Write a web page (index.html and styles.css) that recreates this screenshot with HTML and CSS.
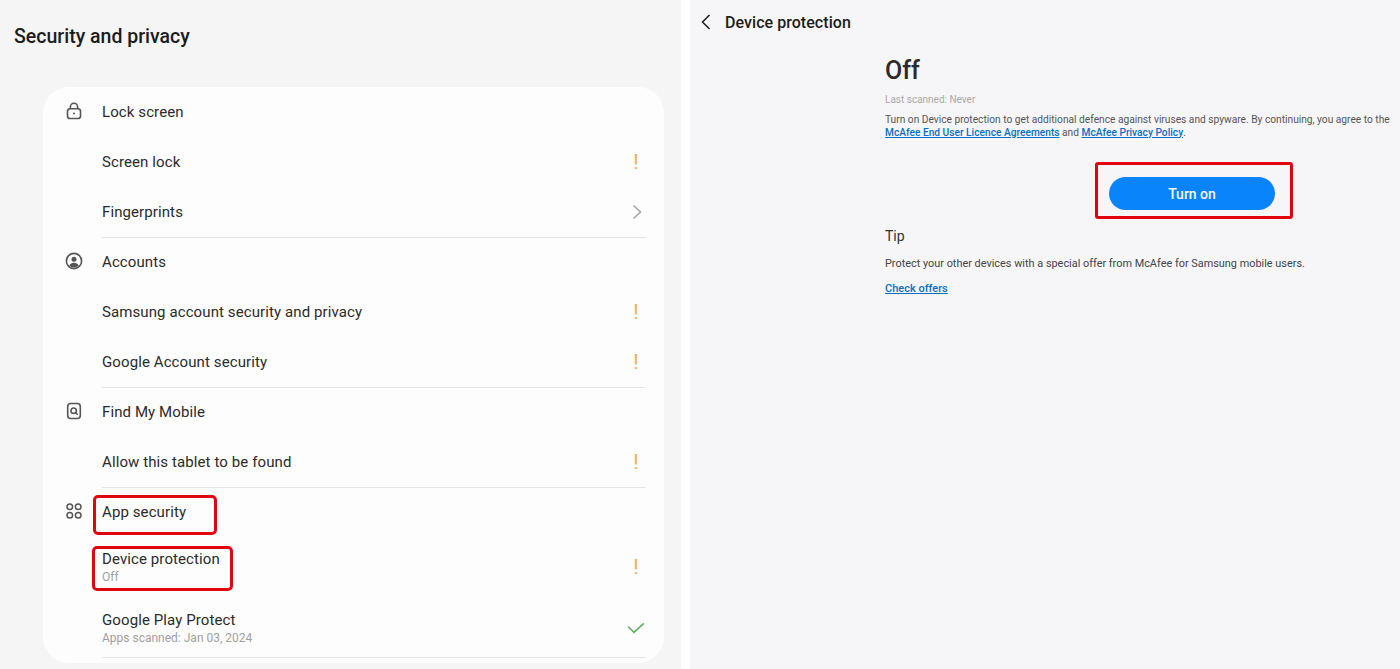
FILE: index.html
```html
<!DOCTYPE html>
<html lang="en">
<head>
  <meta charset="UTF-8">
  <title>Security and privacy</title>
  <link rel="stylesheet" href="styles.css">
</head>
<body>
  <div class="shot">
    <section class="panel-left">
      <h1 class="page-title">Security and privacy</h1>
      <div class="card">
        <div class="group">
          <div class="row">
            <svg class="row-icon" viewBox="0 0 18 18" fill="none" stroke="#555" stroke-width="1.6"><rect x="2.5" y="6.8" width="13" height="9.7" rx="2.6"/><path d="M5.4 6.8V4.9a3.6 3.6 0 0 1 7.2 0v1.9"/><circle cx="9" cy="11.6" r="1" fill="#555" stroke="none"/></svg>
            <span class="row-label">Lock screen</span>
          </div>
          <div class="row">
            <span class="row-label">Screen lock</span>
            <span class="warn">!</span>
          </div>
          <div class="row">
            <span class="row-label">Fingerprints</span>
            <svg class="chevron" viewBox="0 0 10 16" fill="none" stroke="#a3a3a3" stroke-width="1.5"><path d="M1.5 1.5 8.5 8l-7 6.5"/></svg>
          </div>
        </div>
        <div class="group">
          <div class="row">
            <svg class="row-icon" viewBox="0 0 18 18" fill="none" stroke="#555" stroke-width="1.6"><circle cx="9" cy="9" r="7.6"/><circle cx="9" cy="7.2" r="2.5" fill="#555" stroke="none"/><path d="M4.2 13.6c1-2 2.8-2.8 4.8-2.8s3.8.8 4.8 2.8a7 7 0 0 1-9.6 0z" fill="#555" stroke="none"/></svg>
            <span class="row-label">Accounts</span>
          </div>
          <div class="row">
            <span class="row-label">Samsung account security and privacy</span>
            <span class="warn">!</span>
          </div>
          <div class="row">
            <span class="row-label">Google Account security</span>
            <span class="warn">!</span>
          </div>
        </div>
        <div class="group">
          <div class="row">
            <svg class="row-icon" viewBox="0 0 18 18" fill="none" stroke="#555" stroke-width="1.6"><rect x="2.7" y="1.5" width="12.6" height="15" rx="3"/><circle cx="8.7" cy="8.7" r="2.7"/><path d="m10.7 10.7 2 2"/></svg>
            <span class="row-label">Find My Mobile</span>
          </div>
          <div class="row">
            <span class="row-label">Allow this tablet to be found</span>
            <span class="warn">!</span>
          </div>
        </div>
        <div class="group">
          <div class="row">
            <svg class="row-icon" viewBox="0 0 18 18" fill="none" stroke="#555" stroke-width="1.5"><circle cx="4.8" cy="4.8" r="2.8"/><circle cx="13.2" cy="4.8" r="2.8"/><circle cx="4.8" cy="13.2" r="2.8"/><circle cx="13.2" cy="13.2" r="2.8"/></svg>
            <span class="row-label">App security</span>
            <span class="callout callout-app"></span>
          </div>
          <div class="row row-device">
            <div class="row-text">
              <span class="row-label">Device protection</span>
              <span class="row-sub">Off</span>
            </div>
            <span class="warn">!</span>
            <span class="callout callout-device"></span>
          </div>
          <div class="row row-play">
            <div class="row-text">
              <span class="row-label">Google Play Protect</span>
              <span class="row-sub">Apps scanned: Jan 03, 2024</span>
            </div>
            <svg class="check" viewBox="0 0 18 12" fill="none" stroke="#5cad60" stroke-width="1.5"><path d="M1.2 4.8 7 10.4 16.8 1.4"/></svg>
          </div>
        </div>
      </div>
    </section>

    <section class="panel-right">
      <header class="top-bar">
        <svg class="back" viewBox="0 0 10 16" fill="none" stroke="#1c1c1c" stroke-width="1.5"><path d="M8.5 1 1.5 8l7 7"/></svg>
        <h2 class="top-title">Device protection</h2>
      </header>
      <div class="content">
        <div class="status">Off</div>
        <div class="scanned">Last scanned: Never</div>
        <p class="desc">Turn on Device protection to get additional defence against viruses and spyware. By continuing, you agree to the <a href="#">McAfee End User Licence Agreements</a> and <a href="#">McAfee Privacy Policy</a>.</p>
        <div class="btn-wrap">
          <button class="btn-primary">Turn on</button>
        </div>
        <h3 class="tip-title">Tip</h3>
        <p class="tip-text">Protect your other devices with a special offer from McAfee for Samsung mobile users.</p>
        <a class="tip-link" href="#">Check offers</a>
      </div>
    </section>
  </div>
</body>
</html>
```

FILE: styles.css
```css
* {
  box-sizing: border-box;
  margin: 0;
  padding: 0;
}
html, body {
  height: 100%;
  overflow: hidden;
  background: #fff;
  font-family: Roboto, "Liberation Sans", sans-serif;
}
.shot {
  display: flex;
  height: 669px;
}

/* left screenshot */
.panel-left {
  width: 681px;
  background: #f5f5f5;
  padding: 0 17px 0 43px;
}
.page-title {
  font-size: 19.5px;
  font-weight: 500;
  color: #1c1c1c;
  margin-left: -29px;
  height: 87px;
  padding-top: 26px;
  line-height: 22px;
}
.card {
  background: #fdfdfd;
  border-radius: 26px;
  width: 621px;
  height: 576px;
  padding: 0 18px 0 59px;
  overflow: hidden;
}
.group {
  border-bottom: 1px solid #e4e4e4;
  margin-bottom: -1px;
}
.group:last-child {
  height: 171px;
  margin-bottom: 0;
}
.row {
  height: 50px;
  display: flex;
  align-items: center;
  justify-content: space-between;
  position: relative;
}
.row-device {
  height: 58px;
  padding-top: 2px;
}
.row-play {
  height: 62px;
  padding-top: 4px;
}
.row-label {
  font-size: 15px;
  color: #2b2b2b;
  letter-spacing: 0.1px;
  line-height: 18px;
}
.row-text {
  display: flex;
  flex-direction: column;
}
.row-sub {
  font-size: 12px;
  color: #a0a0a0;
  line-height: 16px;
  margin-top: 1px;
}
.row-icon {
  width: 18px;
  height: 18px;
  position: absolute;
  left: -37px;
  top: 15px;
}
.warn {
  font-size: 21px;
  font-weight: 400;
  line-height: 20px;
  color: #f2ad55;
  width: 8px;
  margin-right: 6px;
  text-align: center;
}
.chevron {
  width: 10px;
  height: 16px;
  margin-right: 4px;
}
.check {
  width: 18px;
  height: 12px;
  margin-right: 1px;
}

/* red annotation boxes */
.callout {
  position: absolute;
  border: 3px solid #e0040f;
  border-radius: 5px;
}
.callout-app {
  left: -9px;
  top: 8px;
  width: 124px;
  height: 40px;
}
.callout-device {
  left: -10px;
  top: 9px;
  width: 141px;
  height: 45px;
}

/* right screenshot */
.panel-right {
  flex: 1;
  margin-left: 9px;
  background: #f6f6f8;
}
.top-bar {
  display: flex;
  align-items: center;
  height: 44px;
  padding-left: 11px;
}
.back {
  width: 10px;
  height: 16px;
}
.top-title {
  font-size: 16px;
  font-weight: 500;
  letter-spacing: 0.05px;
  color: #1c1c1c;
  margin-left: 14px;
}
.content {
  padding: 11px 5px 0 195px;
}
.status {
  font-size: 25px;
  font-weight: 500;
  color: #2a2a2a;
  line-height: 32px;
}
.scanned {
  font-size: 10px;
  color: #a8a8a8;
  margin-top: 7px;
  line-height: 12px;
}
.desc {
  font-size: 10.2px;
  color: #555;
  line-height: 12.5px;
  margin-top: 8px;
}
.desc a, .tip-link {
  color: #0a6fc4;
  font-weight: 500;
}
.btn-wrap {
  margin: 38px 0 0 224px;
  width: 166px;
  position: relative;
}
.btn-wrap::after {
  content: "";
  position: absolute;
  left: -14px;
  right: -18px;
  top: -15px;
  bottom: -9px;
  border: 3px solid #e0040f;
  border-radius: 3px;
}
.btn-primary {
  display: block;
  width: 166px;
  height: 33px;
  border: none;
  border-radius: 17px;
  background: #0a84fb;
  color: #f4f9ff;
  font-family: inherit;
  font-size: 14px;
  font-weight: 500;
}
.tip-title {
  font-size: 14px;
  font-weight: 400;
  color: #333;
  margin-top: 18px;
  line-height: 17px;
}
.tip-text {
  font-size: 10.9px;
  color: #444;
  margin-top: 12px;
  line-height: 14px;
}
.tip-link {
  display: inline-block;
  font-size: 11px;
  margin-top: 11px;
  line-height: 14px;
}
```
